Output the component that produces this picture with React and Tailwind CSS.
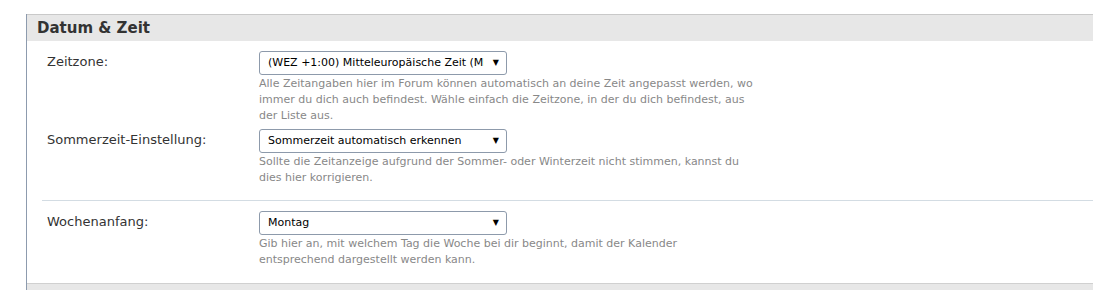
import React from "react";

const rows = [
  {
    label: "Zeitzone:",
    value: "(WEZ +1:00) Mitteleuropäische Zeit (MEZ)",
    help: "Alle Zeitangaben hier im Forum können automatisch an deine Zeit angepasst werden, wo immer du dich auch befindest. Wähle einfach die Zeitzone, in der du dich befindest, aus der Liste aus.",
  },
  {
    label: "Sommerzeit-Einstellung:",
    value: "Sommerzeit automatisch erkennen",
    help: "Sollte die Zeitanzeige aufgrund der Sommer- oder Winterzeit nicht stimmen, kannst du dies hier korrigieren.",
  },
];

const FakeSelect = ({ value }) => (
  <div className="flex h-[24px] w-[248px] items-center rounded-[3px] border border-[#8d9aab] bg-white pl-[8px] pr-[7px]">
    <span className="flex-1 overflow-hidden whitespace-nowrap text-[11px] text-black">{value}</span>
    <span className="ml-[9px] text-[8px] leading-none text-black">▼</span>
  </div>
);

const Row = ({ label, value, help }) => (
  <div className="flex">
    <div className="w-[212px] shrink-0 pt-[1px] text-[13px] text-[#333]">{label}</div>
    <div>
      <FakeSelect value={value} />
      <p className="mt-[1px] w-[495px] text-[11px] leading-[16px] text-[#888]">{help}</p>
    </div>
  </div>
);

export default function App() {
  return (
    <div className="h-[290px] w-[1093px] overflow-hidden bg-white pt-[14px] font-['DejaVu_Sans',Verdana,sans-serif]">
      <div className="ml-[26px] flex h-[276px] flex-col border-l border-[#8d9bae]">
        {/* Kopfzeile */}
        <div className="flex h-[27px] items-center border-t border-[#c9c9c9] bg-[#e7e7e7] pl-[10px]">
          <h2 className="text-[15px] font-bold text-[#333]">Datum &amp; Zeit</h2>
        </div>

        <div className="flex flex-col">
          <div className="pl-[20px] pt-[10px]">
            <Row {...rows[0]} />
          </div>
          <div className="pl-[20px] pt-[5px]">
            <Row {...rows[1]} />
          </div>

          {/* Trennlinie */}
          <div className="ml-[15px] mt-[14px] border-t border-[#d3dce3] pl-[5px] pt-[10px]">
            <Row
              label="Wochenanfang:"
              value="Montag"
              help="Gib hier an, mit welchem Tag die Woche bei dir beginnt, damit der Kalender entsprechend dargestellt werden kann."
            />
          </div>
        </div>

        <div className="mt-auto h-[7px] border-t border-[#d0d0d0] bg-[#e7e7e7]" />
      </div>
    </div>
  );
}
